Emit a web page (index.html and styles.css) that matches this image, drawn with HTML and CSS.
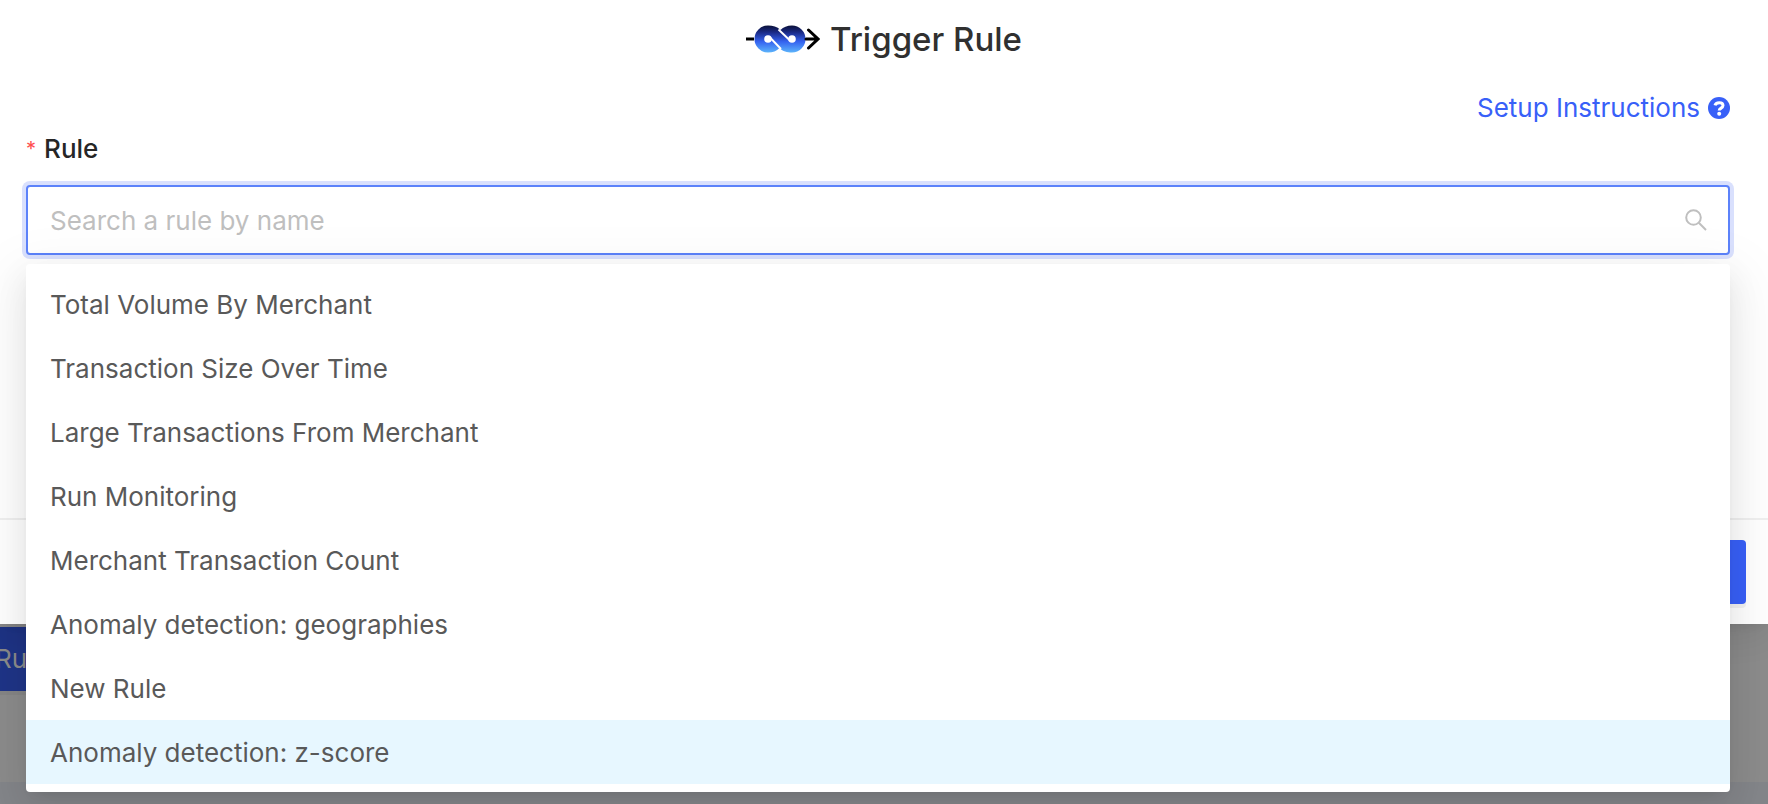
FILE: index.html
```html
<!DOCTYPE html>
<html lang="en">
<head>
<meta charset="utf-8">
<title>Trigger Rule</title>
<link rel="stylesheet" href="styles.css">
</head>
<body>
<main class="modal">
  <header class="modal-header">
    <svg class="logo" viewBox="0 0 74 28" aria-hidden="true">
      <defs>
        <linearGradient id="blue" x1="0" y1="0" x2="0" y2="1">
          <stop offset="0" stop-color="#0a1038"/>
          <stop offset="0.25" stop-color="#1a2a86"/>
          <stop offset="0.6" stop-color="#3563f0"/>
          <stop offset="1" stop-color="#5cb4fb"/>
        </linearGradient>
      </defs>
      <path d="M0 14h8" stroke="#000" stroke-width="3"/>
      <path d="M22 .5c5 0 9 1 12.500 4.500c3-3 6.500-4.500 11.500-4.500a13.500 13.500 0 0 1 0 27c-5 0-9-1-12.500-4.500c-3 3-6.500 4.500-11.500 4.500a13.500 13.500 0 0 1 0-27z" fill="url(#blue)"/>
      <circle cx="22" cy="14" r="3.800" fill="#fff"/>
      <circle cx="46" cy="14" r="3.800" fill="#fff"/>
      <path d="M24 12.500L35 24M44 15.500L32.500 4.500" stroke="#fff" stroke-width="1.900"/>
      <path d="M60 14h11M62.500 5L72 14L62.500 23" fill="none" stroke="#000" stroke-width="3" stroke-linecap="round"/>
    </svg>
    <h1 class="modal-title">Trigger Rule</h1>
  </header>
  <form class="form">
    <a class="help" href="#setup">Setup Instructions
      <svg class="help-icon" viewBox="0 0 22 22" aria-hidden="true">
        <circle cx="11" cy="11" r="11" fill="currentColor"/>
        <path d="M7 8.400C7.800 4.800 15 4.700 15 8.600C15 11.200 11.200 11 11.200 13.500" fill="none" stroke="#fff" stroke-width="3"/>
        <circle cx="11.200" cy="16.800" r="2" fill="#fff"/>
      </svg>
    </a>
    <label class="label" for="rule"><span class="required">*</span>Rule</label>
    <div class="field">
      <input class="search" id="rule" type="text" role="combobox" aria-expanded="true" aria-controls="rules" placeholder="Search a rule by name">
      <svg class="search-icon" viewBox="0 0 22 22" aria-hidden="true">
        <circle cx="8.500" cy="8.500" r="7.300"/>
        <path d="M13.800 13.800L21 21"/>
      </svg>
      <ul class="options" id="rules" role="listbox">
        <li class="option" role="option">Total Volume By Merchant</li>
        <li class="option" role="option">Transaction Size Over Time</li>
        <li class="option" role="option">Large Transactions From Merchant</li>
        <li class="option" role="option">Run Monitoring</li>
        <li class="option" role="option">Merchant Transaction Count</li>
        <li class="option" role="option">Anomaly detection: geographies</li>
        <li class="option" role="option">New Rule</li>
        <li class="option active" role="option" aria-selected="true">Anomaly detection: z-score</li>
      </ul>
    </div>
  </form>
  <footer class="modal-footer">
    <button class="primary" type="button" aria-label="Save"></button>
  </footer>
</main>
<section class="page">
  <button class="page-button" type="button">Rule</button>
  <div class="page-panel"></div>
</section>
</body>
</html>
```
FILE: styles.css
```css
* {
  box-sizing: border-box;
}

body {
  margin: 0;
  min-height: 100vh;
  display: flex;
  flex-direction: column;
  overflow: hidden;
  background: #8c8c8c;
  color: #595959;
  font: 26px/40px Inter, "Liberation Sans", sans-serif;
}

.modal {
  position: relative;
  z-index: 1;
  background: #fff;
  box-shadow: 0 12px 32px rgba(0, 0, 0, 0.08), 0 6px 12px -8px rgba(0, 0, 0, 0.12);
}

.modal-header {
  display: flex;
  align-items: center;
  justify-content: center;
  gap: 10px;
  padding-top: 15px;
}

.logo {
  width: 74px;
  height: 28px;
}

.modal-title {
  margin: 0;
  color: #303030;
  font-size: 33px;
  line-height: 48px;
  font-weight: 500;
}

.form {
  display: flex;
  flex-direction: column;
  padding: 25px 38px 0 26px;
}

.help {
  display: flex;
  align-items: center;
  gap: 8px;
  align-self: flex-end;
  color: #3860f8;
  text-decoration: none;
}

.help-icon {
  width: 22px;
  height: 22px;
}

.label {
  display: flex;
  gap: 8px;
  padding-top: 1px;
  color: #262626;
  font-weight: 500;
}

.required {
  color: #ff4d4f;
  font-size: 20px;
  font-weight: 400;
}

.field {
  position: relative;
  margin-top: 16px;
}

.search {
  display: block;
  width: 100%;
  height: 70px;
  padding: 0 70px 0 22px;
  border: 2px solid #5c82fa;
  border-radius: 4px;
  outline: none;
  background: #fff;
  box-shadow: 0 0 0 4px #d9e0fd;
  font: inherit;
}

.search::placeholder {
  color: #bfbfbf;
  opacity: 1;
}

.search-icon {
  position: absolute;
  top: 24px;
  right: 23px;
  width: 22px;
  height: 22px;
  fill: none;
  stroke: #bfbfbf;
  stroke-width: 2;
}

.options {
  position: absolute;
  top: 79px;
  left: 0;
  right: 0;
  margin: 0;
  padding: 8px 0;
  border-radius: 4px;
  background: #fff;
  list-style: none;
  box-shadow: 0 6px 12px -8px rgba(0, 0, 0, 0.12), 0 12px 32px rgba(0, 0, 0, 0.08), 0 18px 56px 16px rgba(0, 0, 0, 0.05);
}

.option {
  padding: 13px 24px 11px;
}

.active {
  background: #e7f7ff;
}

.modal-footer {
  display: flex;
  justify-content: flex-end;
  margin-top: 263px;
  padding: 20px 22px;
  border-top: 2px solid #f0f0f0;
}

.primary {
  width: 120px;
  height: 64px;
  border: 0;
  border-radius: 4px;
  background: #3860f8;
  box-shadow: 0 4px 0 rgba(0, 0, 0, 0.05);
}

.page {
  flex: 1;
  display: flex;
  flex-direction: column;
  align-items: flex-start;
  padding-top: 3px;
}

.page-button {
  height: 64px;
  margin-left: -37px;
  padding: 0 32px;
  border: 0;
  background: #1f3588;
  box-shadow: 0 4px 0 rgba(0, 0, 0, 0.04);
  color: #8c8c8c;
  font: inherit;
}

.page-panel {
  flex: 1;
  align-self: stretch;
  min-height: 22px;
  margin-top: 91px;
  background: #84868a;
}
```
